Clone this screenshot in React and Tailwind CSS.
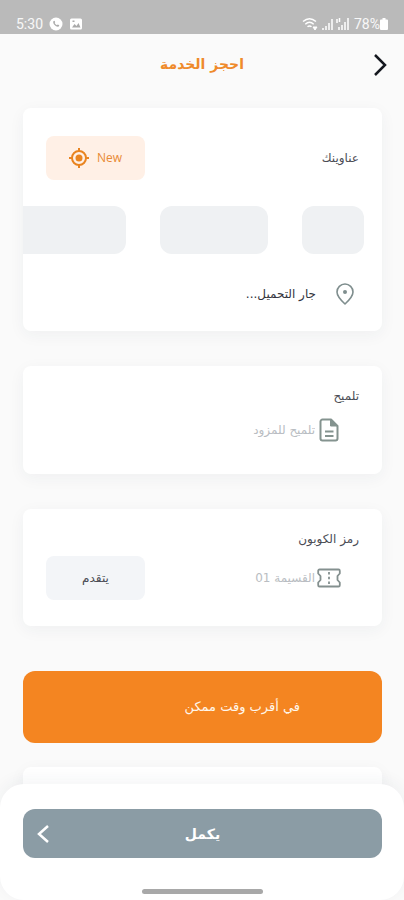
import React from 'react'

const skeletons = ['w-[62px]', 'w-[108px]', 'w-[120px]']

function StatusBar() {
  return (
    <div dir="ltr" className="flex h-[34px] shrink-0 items-end justify-between bg-[#bababa] px-4 pb-0.5 font-['Roboto',sans-serif] text-sm text-white/90">
      <div className="flex items-center gap-1.5">
        <span className="leading-4">5:30</span>
        <svg className="h-3.5 w-3.5" viewBox="0 0 14 14" aria-hidden="true">
          <circle cx="7" cy="7" r="6.500" fill="#fff" />
          <path d="M4.400 4.200c.6-.8 1.100-.7 1.400 0l.4 1-.6.8c.5 1 1.200 1.700 2.300 2.200l.8-.6 1.200.5c.5.3.4.9-.3 1.400C7.600 10.600 3.200 6.600 4.400 4.200z" fill="#aaa" />
        </svg>
        <svg className="h-3.5 w-3.5" viewBox="0 0 14 14" aria-hidden="true">
          <rect x="1" y="1.500" width="12" height="11" rx="1.500" fill="#fff" />
          <path d="M3 10.500 5.500 7l2 2L9.500 6l2 4.500zM3.500 3.500h2v1.500h-2z" fill="#aaa" />
        </svg>
      </div>
      <div className="flex items-center">
        <svg className="h-3.5 w-12" viewBox="0 0 48 14" fill="none" stroke="#fff" strokeWidth="1.500" aria-hidden="true">
          <path d="M1 4.500c4-3.500 9-3.500 13 0M3.300 7.200c2.600-2.300 5.800-2.300 8.400 0M5.500 9.800c1.300-1.100 2.700-1.100 4 0" />
          <path d="M11 10l2 3 2-3z" fill="#fff" strokeWidth="1" />
          <path d="M21 13v-2M24 13V9M27 13V6M30 13V2" />
          <path d="M35 2v4M37.500 1v4M37 13v-3M40 13V8M43 13V5M46 13V1" />
        </svg>
        <span className="ml-1 leading-4">78%</span>
        <svg className="h-3 w-2" viewBox="0 0 8 12" fill="#fff" aria-hidden="true">
          <path d="M2.500 0h3v1.500H7A1 1 0 0 1 8 2.500V11a1 1 0 0 1-1 1H1a1 1 0 0 1-1-1V2.500a1 1 0 0 1 1-1h1.500z" />
        </svg>
      </div>
    </div>
  )
}

function Card({ className = '', children }) {
  return (
    <section className={`overflow-hidden rounded-lg bg-white shadow-[0_4px_16px_rgba(30,60,70,0.05)] ${className}`}>
      {children}
    </section>
  )
}

function TargetIcon() {
  return (
    <svg className="h-5 w-5" viewBox="0 0 20 20" fill="none" stroke="#e98420" strokeWidth="2" aria-hidden="true">
      <circle cx="10" cy="10" r="7" />
      <circle cx="10" cy="10" r="3.500" fill="#e98420" stroke="none" />
      <path d="M10 0v3M10 17v3M0 10h3M17 10h3" />
    </svg>
  )
}

function PinIcon() {
  return (
    <svg className="h-[22px] w-[18px]" viewBox="0 0 18 22" fill="none" stroke="#7f8e8e" strokeWidth="1.600" aria-hidden="true">
      <path d="M9 21C5.500 17.800 1 13.600 1 9a8 8 0 0 1 16 0c0 4.600-4.500 8.800-8 12z" strokeLinejoin="round" />
      <circle cx="9" cy="9" r="2" fill="#7f8e8e" stroke="none" />
    </svg>
  )
}

function NoteIcon() {
  return (
    <svg className="h-6 w-5 shrink-0" viewBox="0 0 20 24" fill="none" stroke="#84938f" strokeWidth="2" aria-hidden="true">
      <path d="M12 1.500H3.500a2 2 0 0 0-2 2v17a2 2 0 0 0 2 2h13a2 2 0 0 0 2-2V8z" strokeLinejoin="round" />
      <path d="M11.500 1.500V8h7z" fill="#84938f" strokeWidth="1" />
      <path d="M6 13.500h8.500M6 18h8.500" />
    </svg>
  )
}

function TicketIcon() {
  return (
    <svg className="h-5 w-6 shrink-0" viewBox="0 0 24 20" fill="none" stroke="#84908f" strokeWidth="1.800" aria-hidden="true">
      <path d="M2.500 1.500h19a1.300 1.300 0 0 1 1.300 1.300V5.500L20.500 8v4l2.300 2.500v2.700a1.300 1.300 0 0 1-1.300 1.300h-19a1.300 1.300 0 0 1-1.300-1.300V14.500L3.500 12V8L1.200 5.500V2.800a1.300 1.300 0 0 1 1.300-1.300z" strokeLinejoin="round" />
      <path d="M12 4v2.500M12 8.800v2.500M12 13.500V16" />
    </svg>
  )
}

function App() {
  return (
    <div dir="rtl" className="flex h-screen flex-col overflow-hidden bg-[#fafafa] font-['DejaVu_Sans',sans-serif] text-xs text-[#4b4d55]">
      <StatusBar />

      <header className="grid h-[60px] shrink-0 grid-cols-[1fr_auto_1fr] items-center px-4">
        <button type="button" aria-label="رجوع" className="justify-self-start">
          <svg className="h-6 w-4" viewBox="0 0 16 24" fill="none" stroke="#15181f" strokeWidth="2.500" aria-hidden="true">
            <path d="m3 3 10 10L3 23" />
          </svg>
        </button>
        <h1 className="text-sm font-bold text-[#ef8a2b]">احجز الخدمة</h1>
      </header>

      <main className="min-h-0 flex-1 overflow-y-auto pt-3.5 pr-[22px] pb-12 pl-[23px] [scrollbar-width:none]">
        <Card className="pt-7 pb-[25px]">
          <div className="flex items-center justify-between px-[23px]">
            <h2>عناوينك</h2>
            <button type="button" dir="ltr" className="flex h-11 w-[99px] items-center justify-center gap-2 rounded-lg bg-[#fff0e6] font-['Open_Sans',sans-serif] text-[#e98a35]">
              <TargetIcon />
              New
            </button>
          </div>
          <div className="mt-[26px] flex gap-[34px] overflow-hidden pr-[18px]">
            {skeletons.map((width) => (
              <div key={width} className={`h-12 shrink-0 rounded-xl bg-[#eff1f3] ${width}`}></div>
            ))}
          </div>
          <div className="mt-7 flex items-center gap-5 pr-7">
            <PinIcon />
            <p className="leading-6 text-[#33353d]">جار التحميل...</p>
          </div>
        </Card>

        <Card className="mt-[35px] px-[23px] pt-[18px] pb-8">
          <label htmlFor="hint" className="block leading-6">تلميح</label>
          <div className="mt-2.5 flex items-center gap-1 pr-5">
            <NoteIcon />
            <input id="hint" placeholder="تلميح للمزود" className="h-6 min-w-0 flex-1 bg-transparent outline-none placeholder:text-[#b9bdc2]" />
          </div>
        </Card>

        <Card className="mt-[35px] px-[23px] pt-[18px] pb-[26px]">
          <label htmlFor="coupon" className="block leading-6">رمز الكوبون</label>
          <div className="mt-[5px] flex items-center gap-3 pr-[18px]">
            <div className="flex min-w-0 flex-1 items-center gap-0.5">
              <TicketIcon />
              <input id="coupon" placeholder="القسيمة 01" className="h-6 min-w-0 flex-1 bg-transparent outline-none placeholder:text-[#b9bdc2]" />
            </div>
            <button type="button" className="h-11 w-[99px] rounded-lg bg-[#f3f5f8]">يتقدم</button>
          </div>
        </Card>

        <button type="button" className="mt-[45px] block h-[72px] w-full rounded-xl bg-[#f48521] pr-[82px] text-right text-[13px] text-[#fff7ec]">
          في أقرب وقت ممكن
        </button>

        <Card className="mt-6 h-24" />
      </main>

      {/* Bottom action sheet, rounded over the scrolled content */}
      <footer className="relative z-10 -mt-8 shrink-0 rounded-3xl bg-white pt-[25px] pr-[22px] pb-1.5 pl-[23px] shadow-[0_-4px_16px_rgba(30,60,70,0.05)]">
        <button type="button" className="grid h-[49px] w-full grid-cols-[1fr_auto_1fr] items-center rounded-xl bg-[#8b9ca5] px-3.5 text-sm font-bold text-white">
          <span className="col-start-2">يكمل</span>
          <svg className="h-5 w-3 justify-self-end" viewBox="0 0 12 20" fill="none" stroke="currentColor" strokeWidth="2.500" aria-hidden="true">
            <path d="m11 2-9 8 9 8" />
          </svg>
        </button>
        <div className="mx-auto mt-[31px] h-[5px] w-[121px] rounded-full bg-[#a8a8a8]"></div>
      </footer>
    </div>
  )
}

export default App
